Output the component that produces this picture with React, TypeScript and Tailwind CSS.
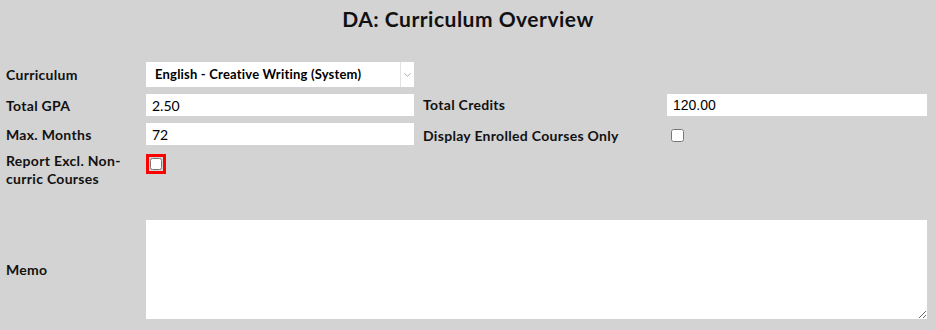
import type { ReactNode } from "react"

function Label({ children, className = "" }: { children: ReactNode; className?: string }) {
  return (
    <div className={`text-[14px] font-bold leading-[18px] tracking-[0.3px] text-[#111] ${className}`}>
      {children}
    </div>
  )
}

function TextBox({ value, mono = false }: { value: string; mono?: boolean }) {
  return (
    <input
      readOnly
      value={value}
      className={`h-[22px] w-full bg-white px-[6px] text-[14px] text-black outline-none ${
        mono ? "font-['Liberation_Sans',sans-serif] text-[13px]" : ""
      }`}
    />
  )
}

function CurriculumSelect() {
  return (
    <div className="flex h-[25px] w-full items-center bg-white">
      <span className="flex-1 pl-[9px] text-[13px] font-bold tracking-[0.2px] text-black">
        English - Creative Writing (System)
      </span>
      <span className="flex h-full w-[14px] items-center justify-center border-l border-[#e2e2e2]">
        <svg width="7" height="4" viewBox="0 0 7 4" fill="none">
          <path d="M0.5 0.5 L3.5 3.2 L6.5 0.5" stroke="#aaa" strokeWidth="1" />
        </svg>
      </span>
    </div>
  )
}

export default function App() {
  return (
    <div className="h-[330px] w-[936px] overflow-hidden bg-[#d3d3d3] font-['Lato',sans-serif]">
      <h1 className="pt-[6px] text-center text-[21px] font-bold leading-[26px] tracking-[0.5px] text-[#111]">
        DA: Curriculum Overview
      </h1>

      <div className="mt-[30px] grid grid-cols-[140px_268px_253px_260px] items-center gap-y-[7px] pl-[6px]">
        <Label>Curriculum</Label>
        <CurriculumSelect />
        <div />
        <div />

        <Label className="mt-[1px]">Total GPA</Label>
        <TextBox value="2.50" />
        <Label className="pl-[9px]">Total Credits</Label>
        <TextBox value="120.00" mono />

        <Label className="mt-[1px]">Max. Months</Label>
        <TextBox value="72" />
        <Label className="mt-[4px] pl-[9px]">Display Enrolled Courses Only</Label>
        <div className="mt-[2px] flex">
          <input type="checkbox" className="ml-[4px] h-[13px] w-[13px]" />
        </div>

        <Label className="self-start">
          Report Excl. Non-
          <br />
          curric Courses
        </Label>
        <div className="self-start">
          <span className="inline-flex border-[3px] border-[#f00] p-[1px]">
            <input type="checkbox" className="m-0 h-[12px] w-[12px]" />
          </span>
        </div>
        <div />
        <div />
      </div>

      <div className="mt-[32px] flex items-center pl-[6px]">
        <div className="w-[140px]">
          <Label>Memo</Label>
        </div>
        <textarea className="h-[99px] w-[781px] resize bg-white outline-none" />
      </div>
    </div>
  )
}
